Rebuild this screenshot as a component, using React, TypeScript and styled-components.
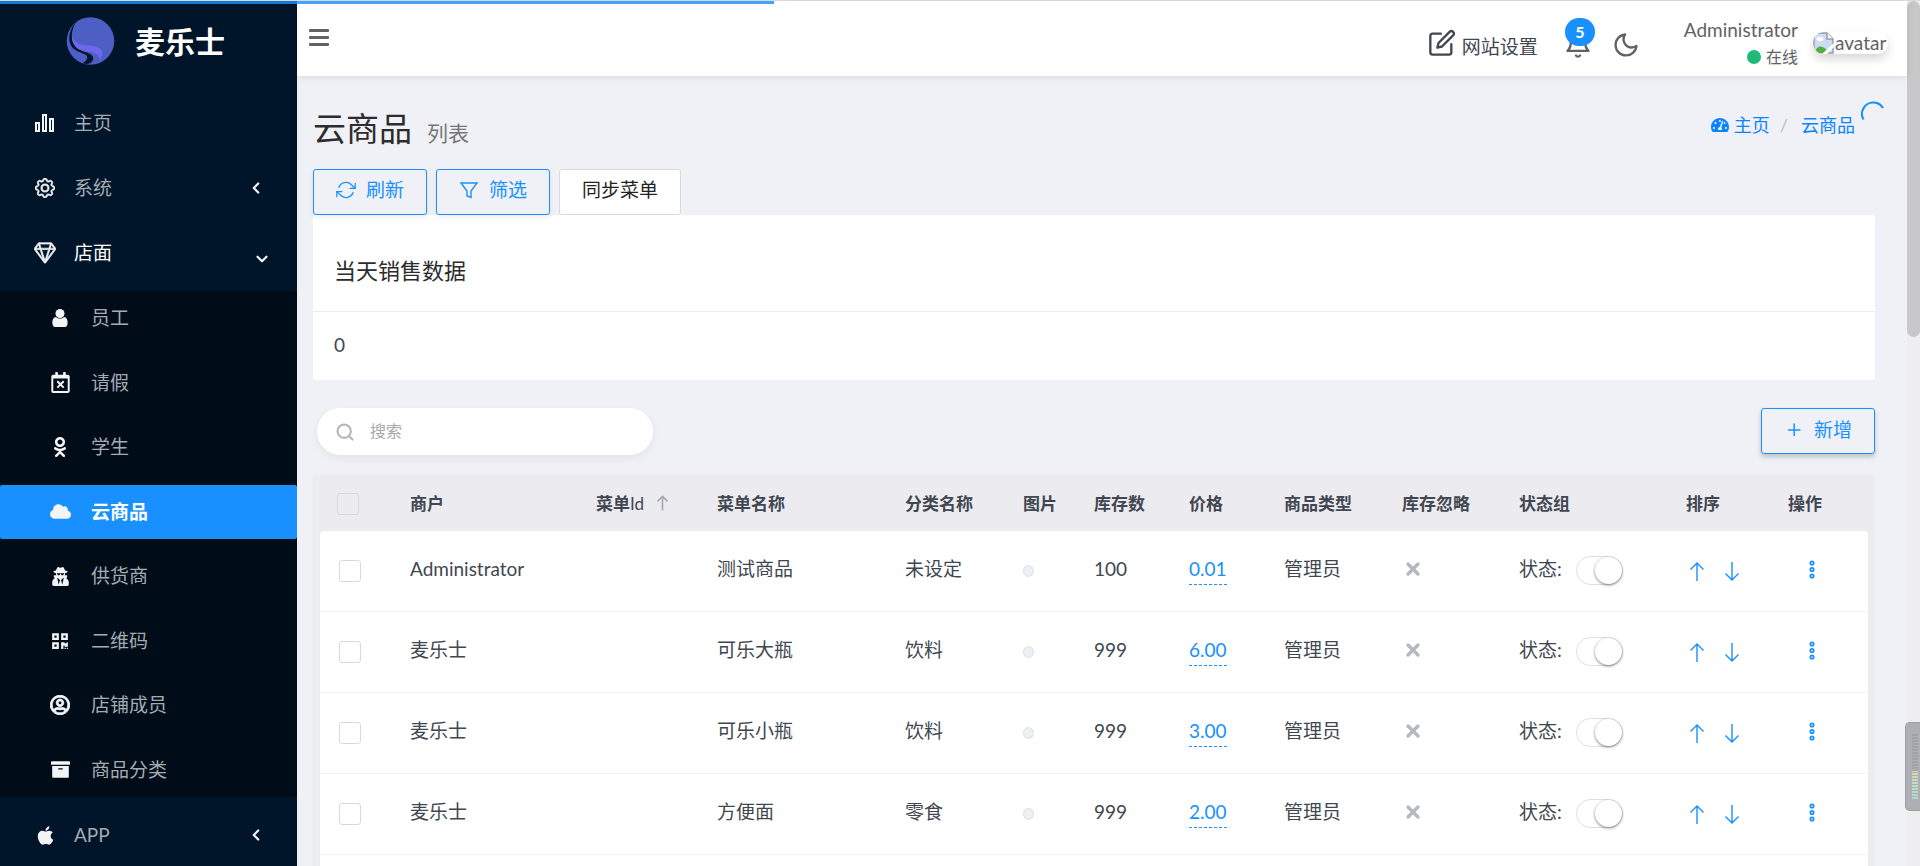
import React from "react";
import styled, { createGlobalStyle, css } from "styled-components";
import {
  FaApple,
  FaArchive,
  FaCloud,
  FaOdnoklassniki,
  FaQrcode,
  FaRegCalendarTimes,
  FaRegUserCircle,
  FaTachometerAlt,
  FaUserSecret,
} from "react-icons/fa";
import { BsGear, BsGem } from "react-icons/bs";
import { FiBell, FiChevronDown, FiChevronLeft, FiEdit, FiMoon, FiRefreshCw, FiSearch, FiX } from "react-icons/fi";

const primary = "#1890ff";

const GlobalStyle = createGlobalStyle`
  *, *::before, *::after { box-sizing: border-box; }
  body {
    margin: 0;
    background: #f0f1f6;
    color: #414750;
    font-family: Lato, "Noto Sans CJK SC", sans-serif;
    font-size: 19px;
    font-weight: 400;
    line-height: 28px;
  }
  button, input { font: inherit; color: inherit; }
  a { color: inherit; text-decoration: none; }
  svg { display: block; flex: none; }
`;

const Shell = styled.div`
  display: flex;
  height: 100vh;
  overflow: hidden;
  border-top: 1px solid #dadada;
  position: relative;
`;

const LoadingBar = styled.div`
  position: absolute;
  top: 0;
  left: 0;
  z-index: 5;
  width: 774px;
  height: 3px;
  background: rgba(24, 144, 255, 0.82);
`;

/* ---------- sidebar ---------- */

const Sidebar = styled.aside`
  flex: none;
  width: 297px;
  background: #001529;
  color: #a3abb3;
`;

const Brand = styled.a`
  display: flex;
  align-items: center;
  gap: 20px;
  height: 80px;
  padding-left: 66px;
  color: #fff;
  font-size: 30px;
  font-weight: 700;
`;

const Menu = styled.nav`
  display: flex;
  flex-direction: column;
  gap: 11px;
  padding-top: 15px;
`;

const SubMenu = styled.div`
  display: flex;
  flex-direction: column;
  justify-content: space-between;
  min-height: 506px;
  background: #000c17;
`;

const MenuLink = styled.a<{ $open?: boolean; $sub?: boolean; $active?: boolean }>`
  display: grid;
  grid-template-columns: 24px 1fr auto;
  align-items: center;
  column-gap: ${(p) => (p.$sub ? 19 : 17)}px;
  height: 54px;
  padding: 0 32px 0 ${(p) => (p.$sub ? 48 : 33)}px;
  border-radius: 2px;
  color: ${(p) => (p.$open ? "#fff" : "inherit")};
  ${(p) =>
    p.$active &&
    css`
      background: ${primary};
      color: #fff;
      font-weight: 700;
    `}

  & > svg {
    justify-self: center;
    color: #f2f4f6;
  }

  ${(p) =>
    p.$open &&
    css`
      & > svg:last-child {
        margin: 12px -6px 0 0;
      }
    `}
`;

/* ---------- main column ---------- */

const Main = styled.div`
  flex: 1;
  min-width: 0;
`;

const Navbar = styled.header`
  display: flex;
  align-items: center;
  height: 75px;
  padding: 0 19px 0 12px;
  background: #fff;
  color: #626262;
  box-shadow: 0 1px 8px rgba(0, 0, 0, 0.1);
  position: relative;
`;

const IconButton = styled.button`
  display: flex;
  padding: 0;
  border: 0;
  background: none;
  color: #626262;
  position: relative;
`;

const MenuToggle = styled(IconButton)`
  margin: 0 auto 2px 0;
`;

const SettingsLink = styled.a`
  display: flex;
  align-items: center;
  gap: 6px;
  margin-right: 26px;
  padding-top: 16px;
  color: #414750;

  & > svg {
    margin-bottom: 8px;
  }
`;

const Badge = styled.span`
  position: absolute;
  top: -13px;
  left: 1px;
  width: 30px;
  height: 28px;
  border-radius: 14px;
  background: ${primary};
  color: #fff;
  font-size: 16px;
  font-weight: 700;
  line-height: 28px;
  text-align: center;
`;

const Tools = styled.div`
  display: flex;
  align-items: center;
  gap: 20px;
  padding-top: 12px;
`;

const UserInfo = styled.div`
  display: flex;
  flex-direction: column;
  align-items: flex-end;
  margin: 0 15px 0 44px;
  padding-top: 9px;
`;

const Status = styled.span`
  display: flex;
  align-items: center;
  gap: 5px;
  font-size: 16px;
  line-height: 26px;

  &::before {
    content: "";
    width: 14px;
    height: 14px;
    border-radius: 50%;
    background: #21b978;
  }
`;

const Avatar = styled.a`
  display: flex;
  align-items: center;
  width: 75px;
  height: 22px;
  margin-top: 9px;
  border-radius: 11px;
  box-shadow: 0 5px 10px rgba(0, 0, 0, 0.16);
  line-height: 20px;

  & > svg {
    border-radius: 11px 0 0 11px;
  }
`;

const Content = styled.main`
  padding: 18px 32px 0 16px;
`;

const PageHead = styled.div`
  display: flex;
  align-items: center;
  justify-content: space-between;
  height: 66px;
`;

const Title = styled.h1`
  display: flex;
  align-items: baseline;
  gap: 15px;
  margin: 0;
  padding-top: 6px;
  color: #2c2c2c;
  font-size: 33px;
  font-weight: 400;
  line-height: 48px;

  & small {
    color: #777;
    font-size: 21px;
  }
`;

const Breadcrumb = styled.nav`
  display: flex;
  align-items: center;
  gap: 5px;
  margin-right: 20px;
  padding-bottom: 5px;
  color: #0a84ff;
  font-size: 18px;

  & i {
    margin: 0 8px 0 5px;
    color: #b9bfc6;
    font-style: normal;
  }
`;

const Spinner = styled.svg`
  position: absolute;
  top: 100px;
  right: 35px;
`;

const Toolbar = styled.div`
  display: flex;
  gap: 9px;
  padding-top: 9px;
`;

const Button = styled.button<{ $plain?: boolean; $raised?: boolean }>`
  display: flex;
  align-items: center;
  gap: 10px;
  height: 46px;
  padding: 0 22px ${(p) => (p.$raised ? 2 : 4)}px;
  border: 1px solid ${(p) => (p.$plain ? "#d9d9d9" : primary)};
  border-radius: 3px;
  background: ${(p) => (p.$plain ? "#fff" : "transparent")};
  color: ${(p) => (p.$plain ? "#222" : primary)};
  box-shadow: ${(p) => (p.$raised ? "0 3px 5px rgba(0, 0, 0, 0.2)" : p.$plain ? "none" : "0 2px 6px rgba(0, 0, 0, 0.08)")};
`;

const Card = styled.section`
  background: #fff;
  border-radius: 3px;
`;

const CardHead = styled.h2`
  margin: 0;
  padding: 40px 21px 24px;
  border-bottom: 1px solid #ededee;
  color: #2c2c2c;
  font-size: 22px;
  font-weight: 400;
  line-height: 32px;
`;

const CardBody = styled.div`
  padding: 19px 21px 21px;
`;

const GridTools = styled.div`
  display: flex;
  justify-content: space-between;
  margin: 28px 0 20px 4px;
`;

const SearchBox = styled.label`
  display: flex;
  align-items: center;
  gap: 15px;
  width: 336px;
  height: 47px;
  padding: 0 18px;
  border-radius: 24px;
  background: #fff;
  color: #b1b6bc;
  box-shadow: 0 3px 8px rgba(0, 0, 0, 0.06);
`;

const SearchInput = styled.input`
  flex: 1;
  min-width: 0;
  padding: 0 0 2px;
  border: 0;
  outline: 0;
  background: none;
  color: #414750;
  font-size: 16px;

  &::placeholder {
    color: #a5a9ae;
  }
`;

const TableWrap = styled.div`
  padding: 0 7px;
  border-radius: 4px 4px 0 0;
  background: #ecebf0;
  box-shadow: 0 2px 4px #ecebf0;
`;

const Table = styled.table`
  width: 100%;
  table-layout: fixed;
  border-collapse: separate;
  border-spacing: 0;
`;

const Th = styled.th`
  height: 56px;
  padding: 2px 0 0;
  font-size: 17px;
  font-weight: 700;
  line-height: 24px;
  text-align: left;
  white-space: nowrap;

  &:first-child {
    padding: 2px 0 0 17px;
  }
`;

const SortHead = styled.span`
  display: flex;
  align-items: center;
  gap: 13px;

  & a {
    padding-bottom: 3px;
    color: #a3a9b1;
  }
  & span {
    font-weight: 400;
  }
`;

const Td = styled.td`
  height: 81px;
  padding: 0 0 4px;
  border-bottom: 1px solid #f0f1f6;
  background: #fff;
  white-space: nowrap;

  &:first-child {
    padding: 0 0 0 19px;
  }
  tr:first-child > &:first-child {
    border-top-left-radius: 4px;
  }
  tr:first-child > &:last-child {
    border-top-right-radius: 4px;
  }
`;

const Checkbox = styled.input`
  appearance: none;
  display: block;
  width: 22px;
  height: 22px;
  margin: 0;
  border: 1px solid #d9d9d9;
  border-radius: 3px;
`;

const Thumb = styled.span`
  display: block;
  width: 11px;
  height: 12px;
  margin-top: 4px;
  border: 1px solid #dde1e8;
  border-radius: 50%;
  background: #eceff4;
`;

const Price = styled.a`
  display: inline-block;
  border-bottom: 1px dashed ${primary};
  color: ${primary};
  line-height: 30px;
`;

const Cross = styled(FiX)`
  margin-left: 1px;
  color: #b3b9c0;
`;

const SwitchLabel = styled.label`
  display: flex;
  align-items: center;
  gap: 14px;
`;

const Switch = styled.input`
  appearance: none;
  width: 47px;
  height: 29px;
  margin: 2px 0 0;
  border: 1px solid #dfdfdf;
  border-radius: 15px;
  background: #fff;

  &::before {
    content: "";
    display: block;
    width: 27px;
    height: 27px;
    margin-left: auto;
    border-radius: 50%;
    background: #fff;
    box-shadow: 0 1px 3px rgba(0, 0, 0, 0.5);
  }
`;

const Actions = styled.span`
  display: flex;
  gap: 21px;
  padding: 4px 0 0 4px;
  color: ${primary};
`;

const MoreButton = styled(IconButton)`
  margin-left: 21px;
  color: ${primary};
`;

/* ---------- right edge ---------- */

const ScrollTrack = styled.div`
  flex: none;
  width: 13px;
  background: #eeeeee;
`;

const ScrollThumb = styled.div`
  height: 336px;
  border-radius: 7px;
  background: #c8c8c8;
`;

const Meter = styled.div`
  position: absolute;
  right: 0;
  bottom: 55px;
  width: 15px;
  height: 89px;
  padding: 10px 2px 10px 6px;
  border-radius: 5px 0 0 5px;
  border: 1px solid #9d9ea4;
  border-right: 0;
  background: #adafb5;
`;

const MeterBars = styled.div`
  height: 100%;
  background: repeating-linear-gradient(#adafb5 0 1px, transparent 1px 3px),
    linear-gradient(#a0a2a7 0 56%, #d5dcb4 56%, #a8dcd0);
`;

/* ---------- drawings ---------- */

const Logo = () => (
  <svg width="49" height="49" viewBox="0 0 49 49">
    <circle cx="24.500" cy="24" r="23.800" fill="#4d5fc4" />
    <path
      d="M6 19C9 28 17 28 26 29C36 30 39 35 34 43C33 37 28 35 19 34C11 33 6 28 6 19Z"
      fill="#6f66ee"
    />
    <path
      d="M10 5C1 15 2 27 8 32C14 37 23 36 21 42C20 44 18 45 17 46C20 48 25 47 27 43C29 36 19 36 12 32C4 27 4 15 10 5Z"
      fill="#001529"
    />
  </svg>
);

const BarsIcon = () => (
  <svg width="20" height="18" viewBox="0 0 20 18" fill="none" stroke="currentColor" strokeWidth="2">
    <rect x="1" y="9" width="3" height="8" />
    <rect x="8" y="1" width="3" height="16" />
    <rect x="15" y="5" width="3" height="12" />
  </svg>
);

const PersonIcon = () => (
  <svg width="16" height="18" viewBox="0 0 16 18" fill="currentColor">
    <circle cx="8" cy="4.500" r="4.500" />
    <path d="M4 8C6 10 10 10 12 8C15 8 16 12 15.500 15C15 17.500 14 18 12 18H4C2 18 1 17.500 0.500 15C0 12 1 8 4 8Z" />
  </svg>
);

const HamburgerIcon = () => (
  <svg width="20" height="17" viewBox="0 0 20 17" fill="currentColor">
    <rect y="0" width="20" height="3" rx="1" />
    <rect y="7" width="20" height="3" rx="1" />
    <rect y="14" width="20" height="3" rx="1" />
  </svg>
);

const FunnelIcon = () => (
  <svg width="20" height="17" viewBox="0 0 20 17" fill="none" stroke="currentColor" strokeWidth="1.400">
    <path d="M2 1H18L12 9V15.500L8 14V9Z" />
  </svg>
);

const PlusIcon = () => (
  <svg width="20" height="14" viewBox="0 0 20 14" stroke="currentColor" strokeWidth="1.500">
    <path d="M4 7H16.500M10.200 0.500V13" />
  </svg>
);

const ArrowIcon = ({ down, size = 19, weight = 1.4 }: { down?: boolean; size?: number; weight?: number }) => (
  <svg width={size - 5} height={size} viewBox="0 0 14 19" fill="none" stroke="currentColor" strokeWidth={weight}>
    <path d={down ? "M7 0V18M0.500 11.500L7 18L13.500 11.500" : "M7 19V1M0.500 7.500L7 1L13.500 7.500"} />
  </svg>
);

const DotsIcon = () => (
  <svg width="6" height="19" viewBox="0 0 6 19" fill="none" stroke="currentColor" strokeWidth="1.700">
    <circle cx="3" cy="3" r="1.700" />
    <circle cx="3" cy="9.500" r="1.700" />
    <circle cx="3" cy="16" r="1.700" />
  </svg>
);

const BrokenImage = () => (
  <svg width="22" height="22" viewBox="0 0 22 22">
    <path d="M1 1H14L20 7V21H1Z" fill="#c9dcf8" stroke="#9a9da3" strokeWidth="1.500" />
    <path d="M14 1V7H20" fill="#fff" stroke="#9a9da3" strokeWidth="1.500" />
    <ellipse cx="7" cy="7" rx="3.500" ry="2.200" fill="#fff" />
    <path d="M2 21C3 13 10 12 16 21Z" fill="#55ad3b" />
    <path d="M9 22L22 10V14L14 22Z" fill="#fff" />
  </svg>
);

/* ---------- data ---------- */

const subItems = [
  { label: "员工", icon: <PersonIcon /> },
  { label: "请假", icon: <FaRegCalendarTimes size={21} /> },
  { label: "学生", icon: <FaOdnoklassniki size={20} /> },
  { label: "云商品", icon: <FaCloud size={21} />, active: true },
  { label: "供货商", icon: <FaUserSecret size={19} /> },
  { label: "二维码", icon: <FaQrcode size={18} /> },
  { label: "店铺成员", icon: <FaRegUserCircle size={20} stroke="currentColor" strokeWidth={24} /> },
  { label: "商品分类", icon: <FaArchive size={19} /> },
];

const columnWidths = [90, 186, 121, 188, 118, 71, 95, 95, 118, 117, 167, 102, 80];

const rows = [
  { owner: "Administrator", name: "测试商品", category: "未设定", stock: "100", price: "0.01" },
  { owner: "麦乐士", name: "可乐大瓶", category: "饮料", stock: "999", price: "6.00" },
  { owner: "麦乐士", name: "可乐小瓶", category: "饮料", stock: "999", price: "3.00" },
  { owner: "麦乐士", name: "方便面", category: "零食", stock: "999", price: "2.00" },
];

export default function App() {
  return (
    <>
      <GlobalStyle />
      <Shell>
        <LoadingBar />
        <Sidebar>
          <Brand href="#">
            <Logo />
            麦乐士
          </Brand>
          <Menu aria-label="主菜单">
            <MenuLink href="#">
              <BarsIcon />
              主页
            </MenuLink>
            <MenuLink href="#">
              <BsGear size={20} stroke="currentColor" strokeWidth={0.6} />
              系统
              <FiChevronLeft size={18} strokeWidth={3} />
            </MenuLink>
            <MenuLink href="#" $open>
              <BsGem size={22} stroke="currentColor" strokeWidth={0.5} />
              店面
              <FiChevronDown size={18} strokeWidth={3} />
            </MenuLink>
            <SubMenu>
              {subItems.map((item) => (
                <MenuLink key={item.label} href="#" $sub $active={item.active}>
                  {item.icon}
                  {item.label}
                </MenuLink>
              ))}
            </SubMenu>
            <MenuLink href="#">
              <FaApple size={21} />
              APP
              <FiChevronLeft size={18} strokeWidth={3} />
            </MenuLink>
          </Menu>
        </Sidebar>

        <Main>
          <Navbar>
            <MenuToggle aria-label="菜单">
              <HamburgerIcon />
            </MenuToggle>
            <SettingsLink href="#">
              <FiEdit size={28} />
              网站设置
            </SettingsLink>
            <Tools>
              <IconButton aria-label="通知">
                <FiBell size={28} />
                <Badge>5</Badge>
              </IconButton>
              <IconButton aria-label="夜间模式">
                <FiMoon size={28} />
              </IconButton>
            </Tools>
            <UserInfo>
              <span>Administrator</span>
              <Status>在线</Status>
            </UserInfo>
            <Avatar href="#">
              <BrokenImage />
              avatar
            </Avatar>
          </Navbar>

          <Content>
            <PageHead>
              <Title>
                云商品 <small>列表</small>
              </Title>
              <Breadcrumb aria-label="路径">
                <FaTachometerAlt size={18} />
                <a href="#">主页</a>
                <i>/</i>
                <a href="#">云商品</a>
              </Breadcrumb>
            </PageHead>
            <Spinner width="24" height="24" viewBox="0 0 24 24" fill="none" stroke={primary} strokeWidth="2">
              <path d="M2.500 18.500A11 11 0 0 1 22 7" />
            </Spinner>

            <Toolbar>
              <Button>
                <FiRefreshCw size={20} strokeWidth={1.5} />
                刷新
              </Button>
              <Button>
                <FunnelIcon />
                筛选
              </Button>
              <Button $plain>同步菜单</Button>
            </Toolbar>

            <Card>
              <CardHead>当天销售数据</CardHead>
              <CardBody>0</CardBody>
            </Card>

            <GridTools>
              <SearchBox>
                <FiSearch size={20} strokeWidth={2.5} />
                <SearchInput type="text" placeholder="搜索" aria-label="搜索" />
              </SearchBox>
              <Button $raised>
                <PlusIcon />
                新增
              </Button>
            </GridTools>

            <TableWrap>
              <Table>
                <colgroup>
                  {columnWidths.map((width, i) => (
                    <col key={i} style={{ width }} />
                  ))}
                </colgroup>
                <thead>
                  <tr>
                    <Th>
                      <Checkbox type="checkbox" aria-label="全选" />
                    </Th>
                    <Th>商户</Th>
                    <Th>
                      <SortHead>
                        <span>
                          <b>菜单</b>Id
                        </span>
                        <a href="#" aria-label="升序">
                          <ArrowIcon size={16} weight={2} />
                        </a>
                      </SortHead>
                    </Th>
                    <Th>菜单名称</Th>
                    <Th>分类名称</Th>
                    <Th>图片</Th>
                    <Th>库存数</Th>
                    <Th>价格</Th>
                    <Th>商品类型</Th>
                    <Th>库存忽略</Th>
                    <Th>状态组</Th>
                    <Th>排序</Th>
                    <Th>操作</Th>
                  </tr>
                </thead>
                <tbody>
                  {rows.map((row, i) => (
                    <tr key={i}>
                      <Td>
                        <Checkbox type="checkbox" aria-label={row.name} />
                      </Td>
                      <Td>{row.owner}</Td>
                      <Td />
                      <Td>{row.name}</Td>
                      <Td>{row.category}</Td>
                      <Td>
                        <Thumb />
                      </Td>
                      <Td>{row.stock}</Td>
                      <Td>
                        <Price href="#">{row.price}</Price>
                      </Td>
                      <Td>管理员</Td>
                      <Td>
                        <Cross size={20} strokeWidth={4} />
                      </Td>
                      <Td>
                        <SwitchLabel>
                          状态:
                          <Switch type="checkbox" role="switch" />
                        </SwitchLabel>
                      </Td>
                      <Td>
                        <Actions>
                          <a href="#" aria-label="上移">
                            <ArrowIcon />
                          </a>
                          <a href="#" aria-label="下移">
                            <ArrowIcon down />
                          </a>
                        </Actions>
                      </Td>
                      <Td>
                        <MoreButton aria-label="更多">
                          <DotsIcon />
                        </MoreButton>
                      </Td>
                    </tr>
                  ))}
                  <tr>
                    <Td colSpan={columnWidths.length} />
                  </tr>
                </tbody>
              </Table>
            </TableWrap>
          </Content>
        </Main>

        <ScrollTrack>
          <ScrollThumb />
        </ScrollTrack>
        <Meter>
          <MeterBars />
        </Meter>
      </Shell>
    </>
  );
}
